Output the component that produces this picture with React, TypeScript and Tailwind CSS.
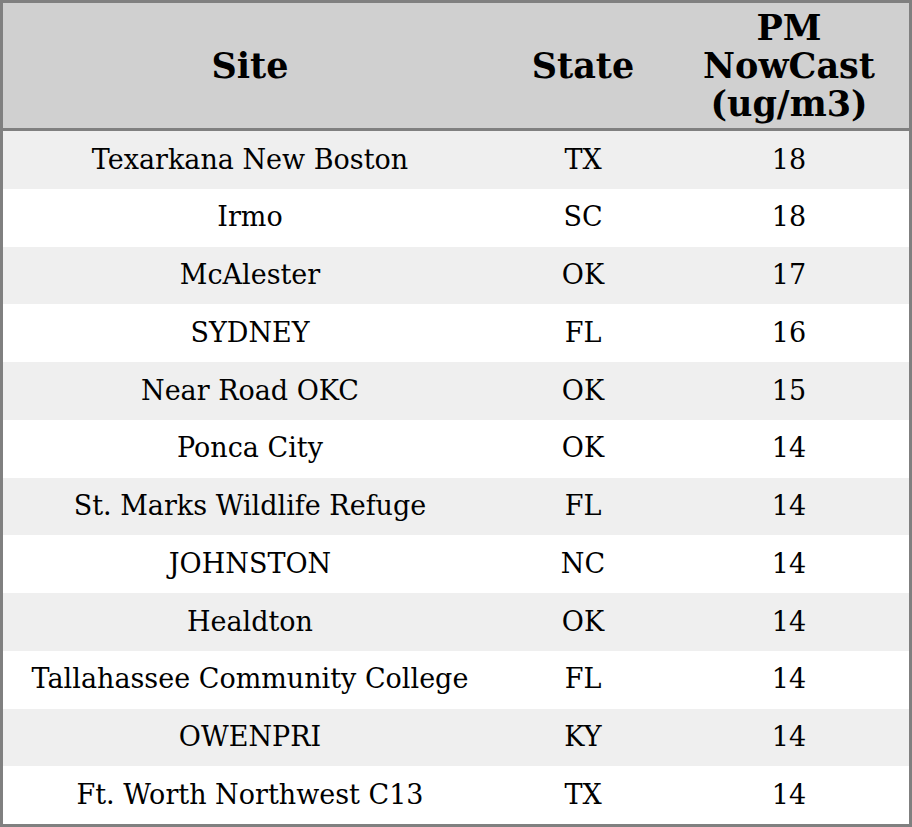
const rows = [
  ["Texarkana New Boston", "TX", "18"],
  ["Irmo", "SC", "18"],
  ["McAlester", "OK", "17"],
  ["SYDNEY", "FL", "16"],
  ["Near Road OKC", "OK", "15"],
  ["Ponca City", "OK", "14"],
  ["St. Marks Wildlife Refuge", "FL", "14"],
  ["JOHNSTON", "NC", "14"],
  ["Healdton", "OK", "14"],
  ["Tallahassee Community College", "FL", "14"],
  ["OWENPRI", "KY", "14"],
  ["Ft. Worth Northwest C13", "TX", "14"],
]

export default function App() {
  return (
    <div className="w-[912px] h-[827px] bg-white font-['DejaVu_Serif',serif] text-black">
      <div className="border-[3px] border-[#808080] h-full flex flex-col">
        <div className="flex h-[128px] shrink-0 bg-[#d0d0d0] border-b-[3px] border-[#808080] font-bold text-[35px] leading-[38px] text-center">
          <div className="w-[494px] flex items-center justify-center">Site</div>
          <div className="w-[172px] flex items-center justify-center">State</div>
          <div className="flex-1 flex items-center justify-center">
            PM
            <br />
            NowCast
            <br />
            (ug/m3)
          </div>
        </div>
        <div className="flex-1 flex flex-col text-[27px]">
          {rows.map((r, i) => (
            <div key={i} className={`flex flex-1 items-center text-center ${i % 2 === 0 ? "bg-[#efefef]" : "bg-white"}`}>
              <div className="w-[494px]">{r[0]}</div>
              <div className="w-[172px]">{r[1]}</div>
              <div className="flex-1">{r[2]}</div>
            </div>
          ))}
        </div>
      </div>
    </div>
  )
}
